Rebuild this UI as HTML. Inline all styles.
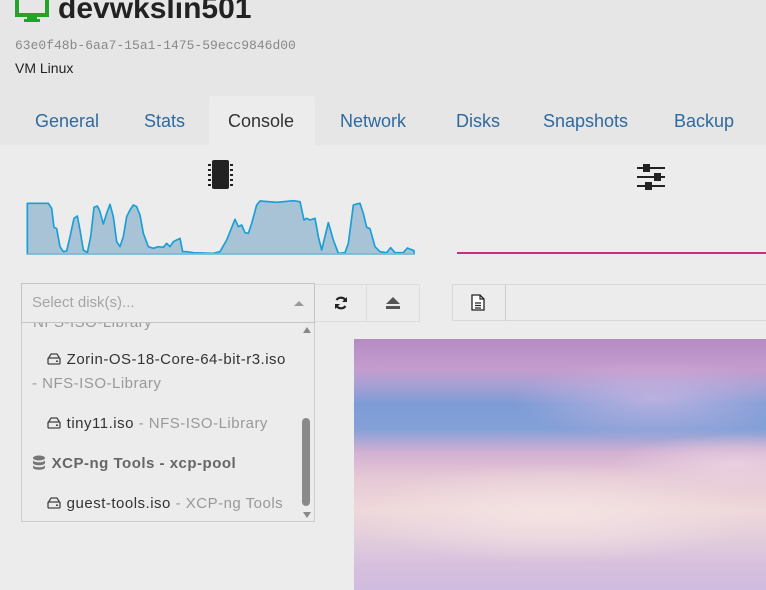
<!DOCTYPE html>
<html><head><meta charset="utf-8"><style>
*{margin:0;padding:0;box-sizing:border-box}
body{width:766px;height:590px;overflow:hidden;background:#ececec;font-family:"Liberation Sans",sans-serif;position:relative}
.hdr{position:absolute;left:0;top:0;width:766px;height:145px;background:#e6e6e6}
.abs{position:absolute}
.tab{position:absolute;top:111px;font-size:18px;color:#2f6a9f;white-space:nowrap}
.item{position:absolute;font-size:15px;color:#333;white-space:nowrap;letter-spacing:.5px}
.g{color:#999}
</style></head><body>
<div class="hdr"></div>
<svg class="abs" style="left:15px;top:0" width="36" height="24"><rect x="2" y="-4" width="30" height="19" fill="none" stroke="#22a32a" stroke-width="4"/><rect x="12" y="16" width="10" height="5" fill="#22a32a"/><rect x="9" y="19" width="16" height="3" fill="#22a32a"/></svg>
<div class="abs" style="left:58px;top:-8px;font-size:30px;font-weight:bold;color:#222">devwkslin501</div>
<div class="abs" style="left:15px;top:38px;font-size:13px;font-family:'Liberation Mono',monospace;color:#888">63e0f48b-6aa7-15a1-1475-59ecc9846d00</div>
<div class="abs" style="left:15px;top:60px;font-size:14px;color:#222">VM Linux</div>
<div class="abs" style="left:209px;top:96px;width:106px;height:50px;background:#ececec;border-radius:3px 3px 0 0"></div>
<div class="tab" style="left:35px">General</div>
<div class="tab" style="left:144px">Stats</div>
<div class="tab" style="left:228px;color:#333">Console</div>
<div class="tab" style="left:340px">Network</div>
<div class="tab" style="left:456px">Disks</div>
<div class="tab" style="left:543px">Snapshots</div>
<div class="tab" style="left:674px">Backup</div>

<svg class="abs" style="left:206px;top:159px" width="28" height="32"><rect x="6" y="1" width="17" height="29" rx="2" fill="#222"/><g stroke="#222" stroke-width="2"><path d="M2 6h3M2 11h3M2 16h3M2 21h3M2 26h3M24 6h3M24 11h3M24 16h3M24 21h3M24 26h3"/></g></svg>

<svg class="abs" style="left:0;top:150px" width="430" height="180" viewBox="0 0 1290 540">
<polygon fill="#a8c3d6" stroke="#1a9ed8" stroke-width="5" stroke-linejoin="round" points="82,312 82,160 145,160 155,175 162,232 170,236 180,290 190,305 200,303 210,260 222,205 232,198 240,240 250,300 262,308 272,260 282,172 292,168 300,185 310,222 320,190 330,163 340,200 350,275 360,290 370,260 380,200 390,180 400,165 410,170 420,195 430,250 445,290 460,295 475,290 490,292 500,280 510,290 520,275 540,265 548,305 560,305 580,308 640,310 660,305 680,270 705,208 715,230 725,225 735,248 745,250 755,220 770,165 780,153 830,157 850,155 880,152 900,155 912,210 920,205 930,210 945,205 955,260 965,300 985,218 1000,270 1015,310 1035,308 1045,280 1060,165 1070,162 1080,160 1090,190 1100,232 1110,236 1125,290 1140,305 1160,308 1172,293 1185,308 1210,308 1222,294 1242,302 1242,312"/>
<rect x="82" y="310" width="1160" height="4" fill="#a8c3d6"/>
</svg>

<svg class="abs" style="left:636px;top:164px" width="30" height="26"><g stroke="#222" stroke-width="2"><path d="M1 4h28M1 13h28M1 22h28"/></g><rect x="7" y="0" width="7" height="8" fill="#222"/><rect x="18" y="9" width="7" height="8" fill="#222"/><rect x="9" y="18" width="7" height="8" fill="#222"/></svg>
<div class="abs" style="left:457px;top:252px;width:309px;height:2px;background:#c8307f"></div>

<div class="abs" style="left:21px;top:283px;width:294px;height:239px;border:1px solid #ccc;background:#ececec"></div>
<div class="abs" style="left:21px;top:283px;width:294px;height:40px;border:1px solid #c4c4c4;background:#ececec"></div>
<div class="abs" style="left:32px;top:294px;font-size:15px;color:#a5a5a5">Select disk(s)...</div>
<div class="abs" style="left:294px;top:301px;width:0;height:0;border-left:5px solid transparent;border-right:5px solid transparent;border-bottom:5px solid #999"></div>
<div class="abs" style="left:315px;top:284px;width:105px;height:38px;border:1px solid #ddd;border-left:none"></div>
<div class="abs" style="left:366px;top:284px;width:1px;height:38px;background:#ddd"></div>
<svg class="abs" style="left:333px;top:295px" width="16" height="16" viewBox="0 0 16 16"><path d="M13 6A5.5 5.5 0 0 0 3.5 5M3 10a5.5 5.5 0 0 0 9.5 1" fill="none" stroke="#222" stroke-width="2.2"/><path d="M14 2v5h-5zM2 14V9h5z" fill="#222"/></svg>
<svg class="abs" style="left:386px;top:297px" width="14" height="12"><path d="M7 0L14 7H0z" fill="#555"/><rect x="0" y="9" width="14" height="3" fill="#555"/></svg>

<div style="position:absolute;left:22px;top:323px;width:292px;height:198px;overflow:hidden">
<div class="item g" style="left:11px;top:-9px">NFS-ISO-Library</div>
<div class="item" style="left:25px;top:28px"><svg width="15" height="12" style="vertical-align:-1px"><rect x="1" y="5" width="12" height="6" rx="1" fill="none" stroke="#444" stroke-width="1.3"/><path d="M1 6L4 1h6l3 5" fill="none" stroke="#444" stroke-width="1.3"/><rect x="9" y="7.5" width="2" height="1.5" fill="#444"/></svg> Zorin-OS-18-Core-64-bit-r3.iso</div>
<div class="item g" style="left:10px;top:52px">- NFS-ISO-Library</div>
<div class="item" style="left:25px;top:92px"><svg width="15" height="12" style="vertical-align:-1px"><rect x="1" y="5" width="12" height="6" rx="1" fill="none" stroke="#444" stroke-width="1.3"/><path d="M1 6L4 1h6l3 5" fill="none" stroke="#444" stroke-width="1.3"/><rect x="9" y="7.5" width="2" height="1.5" fill="#444"/></svg> tiny11.iso <span class="g">- NFS-ISO-Library</span></div>
<div class="item" style="left:10px;top:132px;font-weight:bold;color:#666"><svg width="15" height="15" style="vertical-align:-2px"><ellipse cx="7" cy="3" rx="6" ry="2.5" fill="#777"/><path d="M1 5c0 3 12 3 12 0v3c0 3-12 3-12 0zM1 10c0 3 12 3 12 0v2.5c0 3-12 3-12 0z" fill="#777"/></svg> XCP-ng Tools - xcp-pool</div>
<div class="item" style="left:25px;top:172px"><svg width="15" height="12" style="vertical-align:-1px"><rect x="1" y="5" width="12" height="6" rx="1" fill="none" stroke="#444" stroke-width="1.3"/><path d="M1 6L4 1h6l3 5" fill="none" stroke="#444" stroke-width="1.3"/><rect x="9" y="7.5" width="2" height="1.5" fill="#444"/></svg> guest-tools.iso <span class="g">- XCP-ng Tools</span></div>
<div class="abs" style="left:281px;top:4px;width:0;height:0;border-left:4px solid transparent;border-right:4px solid transparent;border-bottom:6px solid #888"></div>
<div class="abs" style="left:280px;top:95px;width:8px;height:88px;background:#8a8a8a;border-radius:4px"></div>
<div class="abs" style="left:281px;top:189px;width:0;height:0;border-left:4px solid transparent;border-right:4px solid transparent;border-top:6px solid #888"></div>
</div>

<div class="abs" style="left:452px;top:284px;width:320px;height:37px;border:1px solid #d8d8d8"></div>
<div class="abs" style="left:505px;top:284px;width:1px;height:37px;background:#ccc"></div>
<svg class="abs" style="left:470px;top:294px" width="16" height="17"><path d="M2 1h8l4 4v11H2z" fill="#fff" stroke="#222" stroke-width="1.3"/><path d="M10 1v4h4M5 9h6M5 11.5h6M5 14h6" fill="none" stroke="#222" stroke-width="1.2"/></svg>

<div class="abs" style="left:354px;top:339px;width:412px;height:251px;background:
radial-gradient(ellipse 140px 40px at 300px 60px,rgba(220,190,230,.6),transparent),
radial-gradient(ellipse 200px 50px at 200px 175px,rgba(245,228,228,.9),transparent),
radial-gradient(ellipse 120px 30px at 380px 125px,rgba(238,215,228,.7),transparent),
linear-gradient(180deg,#b48cc4 0%,#c59ccd 12%,#a8a0d4 18%,#7d9cd6 26%,#85a0d8 36%,#d2b0d2 45%,#e5c8d5 55%,#eed8da 68%,#e4cfdc 78%,#d6c0de 90%,#d0bcde 100%)"></div>
</body></html>
